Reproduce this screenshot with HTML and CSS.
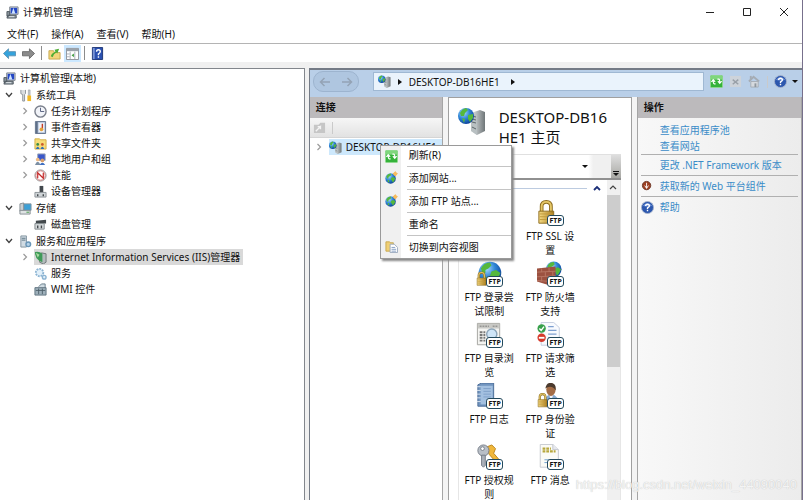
FILE: index.html
```
<!DOCTYPE html>
<html lang="zh-CN">
	<head>
		<meta charset="UTF-8">
		<title>计算机管理</title>
		<link rel="stylesheet" href="styles.css">
	</head>
	<body>
		<!-- 公用图标 -->
		<svg class="defs" aria-hidden="true">
			<defs>
				<radialGradient id="globeFill" cx="35%" cy="30%" r="75%">
					<stop offset="0" stop-color="#a9dcff"/>
					<stop offset="0.5" stop-color="#2f86d6"/>
					<stop offset="1" stop-color="#0b3f96"/>
				</radialGradient>
				<linearGradient id="metal" x1="0" x2="1">
					<stop offset="0" stop-color="#e4e8ea"/>
					<stop offset="1" stop-color="#6f7678"/>
				</linearGradient>
				<linearGradient id="gold" x1="0" x2="1">
					<stop offset="0" stop-color="#f6dc85"/>
					<stop offset="1" stop-color="#a87b1c"/>
				</linearGradient>
				<symbol id="globe" viewBox="0 0 16 16">
					<circle cx="8" cy="8" r="7.5" fill="url(#globeFill)"/>
					<path d="M2 5Q4 1 8 1L9 3L7 5L5 6L5 8L3 8zM9 7L12 6L15 8L13 12L11 14L10 11L8 10zM4 10L6 11L6 14L4 13z" fill="#55b83c"/>
				</symbol>
				<symbol id="server" viewBox="0 0 28 28">
					<path d="M13 6L22 3L27 5V24L19 28L13 24z" fill="url(#metal)"/>
					<path d="M13 6L19 8V28L13 24z" fill="#b9c0c2"/>
					<path d="M14 9L18 10M14 12L18 13M14 15L18 16M14 20L18 22" stroke="#5e676b" fill="none"/>
					<circle cx="8" cy="9" r="8" fill="url(#globeFill)"/>
					<path d="M2 6Q4 2 8 1L10 3L7 6L6 9L3 9zM10 8L15 7L15 11L12 15L10 12zM4 11L7 12L6 16z" fill="#55b83c"/>
				</symbol>
				<symbol id="computer" viewBox="0 0 14 14">
					<path d="M4 1H13V9H4z" fill="#d7dce2" stroke="#78808a"/>
					<path d="M5 2H12V8H5z" fill="#2447c4"/>
					<path d="M8 2L10 8L6 8z" fill="#cfe4ff"/>
					<path d="M1 6H4V11H1zM2 10H11V13H1z" fill="#8a949c" stroke="#4d565e"/>
					<path d="M3 11.5H9" stroke="#e9edf0"/>
				</symbol>
				<symbol id="refresh" viewBox="0 0 14 14">
					<rect x="0.5" y="0.5" width="13" height="13" rx="1" fill="#35b23a" stroke="#8fd98d"/>
					<path d="M1 1H13V5H1z" fill="#7fd67c"/>
					<path d="M6 9.500H4.500Q3.500 9.500 3.500 6M1.500 7.500L3.500 5L5.500 7.500M8 4.500H9.500Q10.500 4.500 10.500 8M8.500 6.500L10.500 9L12.500 6.500" stroke="#fff" stroke-width="1.300" fill="none"/>
				</symbol>
				<symbol id="help" viewBox="0 0 14 14">
					<circle cx="7" cy="7" r="6.500" fill="#2c57ae" stroke="#a8b4cc"/>
					<path d="M2 5Q7 0 12 5Q7 7 2 5z" fill="#6f93d8"/>
					<path d="M5 5.500Q5 3.500 7 3.500T9 5.500Q9 6.500 7 7.500V8.500M7 9.500V11" stroke="#fff" stroke-width="1.500" fill="none"/>
				</symbol>
				<symbol id="siteAdd" viewBox="0 0 14 14">
					<use href="#globe" x="0" y="2" width="12" height="12"/>
					<path d="M11 0L12 2L14 3L12 4L11 6L10 4L8 3L10 2z" fill="#f2a53a"/>
					<circle cx="11" cy="3" r="2" fill="#f7bd5e"/>
				</symbol>
				<symbol id="lock" viewBox="0 0 20 26">
					<path d="M5 13V7Q5 2 10 2T15 7V13" fill="none" stroke="#8d6c1f" stroke-width="4"/>
					<path d="M5 13V7Q5 2 10 2T15 7V13" fill="none" stroke="#e5c766" stroke-width="2"/>
					<path d="M2 12H18V25H2z" fill="url(#gold)" stroke="#8d6c1f"/>
					<path d="M3 15H17M3 18H17M3 21H17" stroke="#c19a3b"/>
				</symbol>
				<symbol id="open" viewBox="0 0 8 8">
					<path d="M1 2L4 5.500L7 2" fill="none" stroke="#404040" stroke-width="1.300"/>
				</symbol>
				<symbol id="closed" viewBox="0 0 8 8">
					<path d="M2.500 1L5.500 4L2.500 7" fill="none" stroke="#9a9a9a" stroke-width="1.200"/>
				</symbol>
			</defs>
		</svg>

		<!-- 标题栏 -->
		<header class="title-bar">
			<svg class="ico"><use href="#computer"/></svg>
			<h1>计算机管理</h1>
			<div class="win-btns">
				<button aria-label="最小化"><svg viewBox="0 0 10 10"><path d="M1 5.500H9" stroke="#222"/></svg></button>
				<button aria-label="最大化"><svg viewBox="0 0 10 10"><path d="M1.500 1.500H8.500V8.500H1.500z" stroke="#222" fill="none"/></svg></button>
				<button aria-label="关闭"><svg viewBox="0 0 10 10"><path d="M1 1L9 9M9 1L1 9" stroke="#222"/></svg></button>
			</div>
		</header>

		<nav class="menu-bar">
			<button>文件(F)</button>
			<button>操作(A)</button>
			<button>查看(V)</button>
			<button>帮助(H)</button>
		</nav>

		<div class="tool-bar">
			<button aria-label="后退"><svg class="ico" viewBox="0 0 14 14"><path d="M0.500 7L6 2V5H13.500V9.500H6V12.500z" fill="#35a3dc" stroke="#5e93b4"/></svg></button>
			<button aria-label="前进"><svg class="ico" viewBox="0 0 14 14"><path d="M13.500 7L8 2V5H0.500V9.500H8V12.500z" fill="#8c8c8c" stroke="#6b6b6b"/></svg></button>
			<i class="sep"></i>
			<button aria-label="上一级"><svg class="ico" viewBox="0 0 14 14"><path d="M1 4H6L7 6H13V13H1z" fill="#f3d67b" stroke="#c7a94f"/><path d="M3 10Q4 6 8 5L7 3L12 2L10 7L9 6Q6 7 5 11z" fill="#4fae36"/></svg></button>
			<button class="on" aria-label="显示操作窗格"><svg class="ico" viewBox="0 0 14 14"><path d="M0.500 1.500H13.500V13.500H0.500z" fill="#fff" stroke="#8a8f96"/><path d="M1 2H13V4.500H1z" fill="#9aa2ab"/><path d="M4.500 5V13M9.500 5V13M1 7.500H4M1 10.500H4" stroke="#a8aeb5"/><path d="M8.500 7V11L6 9z" fill="#3a9a3a"/></svg></button>
			<i class="sep"></i>
			<button aria-label="帮助"><svg class="ico" viewBox="0 0 14 14"><path d="M1.500 0.500H12.500V13.500H1.500z" fill="#2b50b0" stroke="#1c3474"/><path d="M2 1H4V13H2z" fill="#7b95d6"/><path d="M6 5Q6 3 8 3T10 5Q10 6 8 7.500V9M8 10V11.500" fill="none" stroke="#fff" stroke-width="1.500"/></svg></button>
		</div>

		<main class="main">
			<!-- 左侧树 -->
			<section class="tree">
				<div class="row root"><svg class="ico"><use href="#computer"/></svg>计算机管理(本地)</div>
				<ul>
					<li>
						<div class="row"><svg class="arrow"><use href="#open"/></svg><svg class="ico" viewBox="0 0 14 14"><path d="M2 1V5L4 6V13H6V6L7 5V1" fill="#d9dde0" stroke="#8b9298"/><path d="M10 1H12V7H10z" fill="#c3c8cc" stroke="#8b9298" stroke-width="0.500"/><path d="M9 7H13V13H9z" fill="#f2b824"/></svg>系统工具</div>
						<ul>
							<li class="row"><svg class="arrow"><use href="#closed"/></svg><svg class="ico" viewBox="0 0 14 14"><circle cx="7" cy="7" r="6" fill="#f1f3f8" stroke="#7b808c" stroke-width="1.500"/><path d="M7 3V7H11" fill="none" stroke="#555f7d"/></svg>任务计划程序</li>
							<li class="row"><svg class="arrow"><use href="#closed"/></svg><svg class="ico" viewBox="0 0 14 14"><path d="M1.500 0.500H12.500V13.500H1.500z" fill="#b7c6dc" stroke="#5f6f88"/><path d="M2 1H4V13H2z" fill="#5f6f88"/><path d="M5 2H11V12H5z" fill="#eef2f8"/><path d="M9 3V9" stroke="#c33b28" stroke-width="1.500"/><circle cx="8" cy="9" r="2" fill="#e2a23c"/></svg>事件查看器</li>
							<li class="row"><svg class="arrow"><use href="#closed"/></svg><svg class="ico" viewBox="0 0 14 14"><path d="M1 2H6L7 3H13V13H1z" fill="#f7dc77" stroke="#cfae45"/><circle cx="4" cy="8" r="1.500" fill="#3c8c46"/><circle cx="9" cy="8" r="1.500" fill="#cc5a2c"/><path d="M2 13Q4 8 6 13zM7 13Q9 8 11 13z" fill="#2e6fb7"/></svg>共享文件夹</li>
							<li class="row"><svg class="arrow"><use href="#closed"/></svg><svg class="ico" viewBox="0 0 14 14"><path d="M4 1H12V8H4z" fill="#3a57c9" stroke="#9aa4b5"/><circle cx="4" cy="7" r="2" fill="#efbc87"/><path d="M1 13Q4 6 7 13z" fill="#7c8fa4"/><circle cx="9" cy="8" r="2" fill="#d9a06c"/><path d="M6 13Q9 8 12 13z" fill="#3f6fc1"/></svg>本地用户和组</li>
							<li class="row"><svg class="arrow"><use href="#closed"/></svg><svg class="ico" viewBox="0 0 14 14"><circle cx="7" cy="7" r="6" fill="#fff" stroke="#8f8f8f"/><circle cx="7" cy="7" r="5" fill="none" stroke="#cf5151" stroke-width="0.700"/><path d="M4 10V4L10 10V4" fill="none" stroke="#c42a2a" stroke-width="1.300"/></svg>性能</li>
							<li class="row"><i class="arrow"></i><svg class="ico" viewBox="0 0 14 14"><path d="M6 1H10V8H6z" fill="#42484d"/><path d="M1 8H13V13H1z" fill="#cfd4d7" stroke="#8a9196"/><path d="M4 10V12M10 10V12" stroke="#41474b" stroke-width="1.500"/></svg>设备管理器</li>
						</ul>
					</li>
					<li>
						<div class="row"><svg class="arrow"><use href="#open"/></svg><svg class="ico" viewBox="0 0 14 14"><path d="M5 2H13V9H5z" fill="#3ca0d6" stroke="#87949c"/><path d="M1 2L5 1V9L1 10z" fill="#c8ced1" stroke="#858e93"/><path d="M1 9H12V13H1z" fill="#dfe3e4" stroke="#858e93"/><path d="M8 11H11" stroke="#3f9b43"/></svg>存储</div>
						<ul>
							<li class="row"><i class="arrow"></i><svg class="ico" viewBox="0 0 14 14"><path d="M2 3L13 2V6H2z" fill="#43494d"/><path d="M1 6H11V12H1z" fill="#d4d8da" stroke="#80878b"/><path d="M4 8V11M8 8V11" stroke="#42484c" stroke-width="1.500"/></svg>磁盘管理</li>
						</ul>
					</li>
					<li>
						<div class="row"><svg class="arrow"><use href="#open"/></svg><svg class="ico" viewBox="0 0 14 14"><path d="M2 1H8V13H2z" fill="#d0dbe3" stroke="#7f929e"/><path d="M3 3.500H7M3 5.500H7" stroke="#58717f"/><circle cx="10" cy="10" r="2.500" fill="#b5d2e8" stroke="#6996b8" stroke-width="1.500"/></svg>服务和应用程序</div>
						<ul>
							<li class="row"><svg class="arrow"><use href="#closed"/></svg><span class="sel"><svg class="ico" viewBox="0 0 14 14"><path d="M8 2L13 3V12L10 14L6 12z" fill="#b4bbbd" stroke="#6d7577"/><path d="M1 1Q6 0 9 3V12L5 10Q1 7 1 1z" fill="#3f9a58"/><path d="M2 2L6 4L4 7z" fill="#a9dca0"/></svg>Internet Information Services (IIS)管理器</span></li>
							<li class="row"><i class="arrow"></i><svg class="ico" viewBox="0 0 14 14"><circle cx="6" cy="6" r="4" fill="#e2f0fa" stroke="#8cb4d3" stroke-width="2" stroke-dasharray="2 1"/><circle cx="11" cy="11" r="2" fill="#e2f0fa" stroke="#8cb4d3" stroke-width="1.500"/></svg>服务</li>
							<li class="row"><i class="arrow"></i><svg class="ico" viewBox="0 0 14 14"><path d="M5 4L8 1H12V5" fill="#cfdbe2" stroke="#657a88"/><path d="M1 5H13V13H1z" fill="#9eb0bb" stroke="#5c707d"/><path d="M2 8H12M5 6V12M9 6V12" stroke="#50616c"/></svg>WMI 控件</li>
						</ul>
					</li>
				</ul>
			</section>

			<!-- IIS 管理器 -->
			<section class="iis">
				<div class="address-bar">
					<div class="nav-btns">
						<button aria-label="后退"><svg viewBox="0 0 12 12"><path d="M11 6H2M5.500 2L1.500 6L5.500 10" fill="none" stroke="#94a3b5" stroke-width="1.500"/></svg></button>
						<button aria-label="前进"><svg viewBox="0 0 12 12"><path d="M1 6H10M6.500 2L10.500 6L6.500 10" fill="none" stroke="#94a3b5" stroke-width="1.500"/></svg></button>
					</div>
					<div class="path">
						<svg class="ico"><use href="#server"/></svg>
						<i class="tri"></i>
						<span>DESKTOP-DB16HE1</span>
						<i class="tri"></i>
					</div>
					<div class="path-btns">
						<button aria-label="刷新"><svg class="ico"><use href="#refresh"/></svg></button>
						<button aria-label="停止" disabled><svg class="ico" viewBox="0 0 14 14"><path d="M1 1H13V13H1z" fill="#cdd3da"/><path d="M4 5L10 10M10 5L4 10" stroke="#99a0a8" stroke-width="1.500"/></svg></button>
						<button aria-label="主页" disabled><svg class="ico" viewBox="0 0 14 14"><path d="M2 1H4V5H2z" fill="#a5acb4"/><path d="M1 7L6 2L12 7" fill="none" stroke="#a5acb4" stroke-width="2"/><path d="M3 7H11V13H3z" fill="#d5d9de" stroke="#a5acb4"/><path d="M7 9H9V13H7z" fill="#8f979f"/></svg></button>
						<i class="line"></i>
						<button class="drop" aria-label="帮助"><svg class="ico"><use href="#help"/></svg><i class="down"></i></button>
					</div>
				</div>

				<div class="cols">
					<div class="conn">
						<h2>连接</h2>
						<div class="conn-tool">
							<svg class="ico" viewBox="0 0 14 14"><path d="M1 4H6L8 2H13V13H1z" fill="#c6c6c6"/><path d="M3 11L8 6V9M8 6H5" stroke="#f4f4f4" stroke-width="1.500" fill="none"/></svg>
							<i class="line"></i>
						</div>
						<div class="node">
							<svg class="arrow"><use href="#closed"/></svg>
							<span><svg class="ico"><use href="#server"/></svg>DESKTOP-DB16HE1</span>
							<!-- 右键菜单 -->
							<ul class="menu">
								<li><button><svg class="ico"><use href="#refresh"/></svg><span>刷新(R)</span></button></li>
								<li><button><svg class="ico"><use href="#siteAdd"/></svg><span>添加网站...</span></button></li>
								<li><button><svg class="ico"><use href="#siteAdd"/></svg><span>添加 FTP 站点...</span></button></li>
								<li><button><i class="ico"></i><span>重命名</span></button></li>
								<li><button><svg class="ico" viewBox="0 0 14 14"><path d="M1 2H5L6 3H9V12H1z" fill="#f0cf73" stroke="#c8a84f"/><path d="M5.500 4.500H10L13.500 8V13.500H5.500z" fill="#fff" stroke="#9aa9bd"/><path d="M7 8H11M7 10H12M7 12H12" stroke="#8099c0"/></svg><span>切换到内容视图</span></button></li>
							</ul>
						</div>
					</div>

					<div class="home">
						<div class="home-title">
							<svg><use href="#server"/></svg>
							<h2>DESKTOP-DB16HE1 主页</h2>
						</div>
						<div class="filter">
							<i class="down"></i>
							<div class="more"><i class="down"></i></div>
						</div>
						<div class="view">
							<div class="feats">
								<div class="group"><i></i><svg viewBox="0 0 8 8"><path d="M1 6L4 3L7 6" fill="none" stroke="#1b2f78" stroke-width="1.800"/></svg></div>
								<ul>
									<li></li>
									<li><div class="pic"><svg viewBox="0 0 28 28"><use href="#lock" x="0" y="0" width="20" height="26"/></svg><b>FTP</b></div>FTP SSL 设置</li>
									<li><div class="pic"><svg viewBox="0 0 28 28"><use href="#globe" x="2" y="0" width="26" height="26"/><use href="#lock" x="0" y="11" width="12" height="16"/></svg><b>FTP</b></div>FTP 登录尝试限制</li>
									<li><div class="pic"><svg viewBox="0 0 28 28"><use href="#globe" x="9" y="0" width="18" height="18"/><path d="M0 8L20 6V22L13 26L0 22z" fill="#9c5140"/><path d="M0 12L20 11M0 17L20 16M0 21L14 22M5 8V12M13 7V12M9 12V17M17 11V16M5 17V22M13 17V25" stroke="#b87765" fill="none"/></svg><b>FTP</b></div>FTP 防火墙支持</li>
									<li><div class="pic"><svg viewBox="0 0 28 28"><path d="M1.500 1.500H25.500V24.500H1.500z" fill="#f4f4f1" stroke="#a2a29e"/><path d="M2 2H25V7H2z" fill="#c9c9c5"/><path d="M4 4.500H14M18 4.500H23" stroke="#777" stroke-dasharray="2 1"/><path d="M4 11H10M4 14H10M4 17H10M4 20H10" stroke="#777" stroke-width="2" stroke-dasharray="3 1"/><circle cx="17" cy="13" r="5.500" fill="#cfe5f7" stroke="#8ca4b8" stroke-width="1.500"/></svg><b>FTP</b></div>FTP 目录浏览</li>
									<li><div class="pic"><svg viewBox="0 0 28 28"><path d="M4.500 0.500H18L24 6V25H4.500z" fill="#f8fafe" stroke="#c2cbdc"/><path d="M12 5H18M12 9H21M12 13H21M12 17H21" stroke="#7d9fd0" stroke-width="1.500"/><circle cx="5" cy="7" r="4.500" fill="#37a04b"/><path d="M2.500 7L4.500 9L7.500 5" stroke="#fff" fill="none" stroke-width="1.500"/><circle cx="5" cy="17" r="4.500" fill="#d63a2c"/><path d="M2 17H8" stroke="#fff" stroke-width="2"/></svg><b>FTP</b></div>FTP 请求筛选</li>
									<li><div class="pic"><svg viewBox="0 0 28 28"><path d="M2 2L6 0H19V22L16 25H2z" fill="#7295bf" stroke="#496b96"/><path d="M5 3H18V23H5z" fill="#a3c0e0"/><path d="M8 6H16M8 9H16M8 12H16M8 15H16" stroke="#7e9fc7"/><path d="M1 4H5M1 8H5M1 12H5M1 16H5M1 20H5" stroke="#dbe5f0"/></svg><b>FTP</b></div>FTP 日志</li>
									<li><div class="pic"><svg viewBox="0 0 28 28"><path d="M8 22Q8 13 15 12Q24 13 24 25H8z" fill="#87a9d1"/><path d="M13 12L15 19L18 12z" fill="#eef3f8"/><ellipse cx="15" cy="7" rx="5" ry="7" fill="#a36c46"/><path d="M9 6Q10 -1 16 0Q21 1 20 8Q18 4 14 4Q11 4 9 6z" fill="#4b3a2e"/><use href="#lock" x="0" y="10" width="12" height="17"/></svg><b>FTP</b></div>FTP 身份验证</li>
									<li><div class="pic"><svg viewBox="0 0 28 28"><path d="M12 3L17 1L21 5L19 10L25 17L22 20L14 11z" fill="#f0b73b" stroke="#b88218"/><circle cx="8" cy="7" r="6" fill="#b9bfc7" stroke="#747b86"/><circle cx="7" cy="5" r="2" fill="#fff" stroke="#747b86"/><path d="M6 12H10V23L8 25L6 23z" fill="#aab1ba" stroke="#747b86"/></svg><b>FTP</b></div>FTP 授权规则</li>
									<li><div class="pic"><svg viewBox="0 0 28 28"><path d="M3.500 0.500H17L23 6V25H3.500z" fill="#fbfbf6" stroke="#c4c7ce"/><path d="M17 0L17 6H23" fill="#e6e8ee" stroke="#c4c7ce"/><path d="M6 5H15M6 8H20" stroke="#b7a73c" stroke-width="2.500" stroke-dasharray="3 1"/><path d="M8 17H20M8 20H20" stroke="#6b9ccc"/></svg><b>FTP</b></div>FTP 消息</li>
								</ul>
							</div>
							<div class="scroll">
								<svg viewBox="0 0 8 8"><path d="M1 6L4 3L7 6" fill="none" stroke="#444" stroke-width="1.200"/></svg>
								<div class="thumb"></div>
							</div>
						</div>
					</div>

					<aside class="actions">
						<h2>操作</h2>
						<ul>
							<li><a href="#">查看应用程序池</a></li>
							<li><a href="#">查看网站</a></li>
							<li class="cut"><a href="#">更改 .NET Framework 版本</a></li>
							<li class="cut"><svg class="ico" viewBox="0 0 14 14"><circle cx="6" cy="6" r="4.500" fill="#9c3f22" stroke="#6e3a2a"/><path d="M6 3V9M4 6L6 9L8 6" stroke="#fff" fill="none"/></svg><a href="#">获取新的 Web 平台组件</a></li>
							<li class="cut"><svg class="ico"><use href="#help"/></svg><a href="#">帮助</a></li>
						</ul>
					</aside>
				</div>
			</section>
		</main>
		<div class="mark">https://blog.csdn.net/weixin_44090040</div>
	</body>
</html>
```
FILE: styles.css
```
*{
	padding: 0;
	margin: 0;
	box-sizing: border-box;
}
body {
	display: flex;
	flex-direction: column;
	height: 100vh;
	overflow: hidden;
	position: relative;
	border-right: 1px solid #77708c;
	background: #fff;
	color: #111;
	font: 10px/16px "Noto Sans", "Noto Sans CJK SC", sans-serif;
}
ul {
	list-style: none;
}
button {
	border: 0;
	background: none;
	color: inherit;
	font: inherit;
}
a {
	color: #3a8cc8;
	text-decoration: none;
}
svg {
	display: block;
	flex: none;
}
.defs {
	position: absolute;
	width: 0;
	height: 0;
}
.ico {
	width: 13px;
	height: 13px;
	flex: none;
}

/*标题栏*/
.title-bar {
	display: flex;
	align-items: center;
	height: 24px;
	padding-left: 6px;
	gap: 4px;
	flex: none;
}
.title-bar h1 {
	font-size: 10px;
	font-weight: 400;
}
.win-btns {
	display: flex;
	margin-left: auto;
}
.win-btns button {
	width: 37px;
	height: 24px;
}
.win-btns svg {
	width: 10px;
	height: 10px;
	margin: 0 auto;
}

/*菜单和工具栏*/
.menu-bar {
	display: flex;
	height: 20px;
	padding: 1px 0 0 7px;
	gap: 13px;
	border-bottom: 1px solid #b4b4b4;
	flex: none;
}
.tool-bar {
	display: flex;
	align-items: center;
	height: 18px;
	padding-left: 3px;
	gap: 6px;
	flex: none;
}
.tool-bar .sep {
	width: 1px;
	height: 14px;
	background: #8c8c8c;
}
.tool-bar .on {
	margin: 0 -3px;
	padding: 2px;
	background: #cce8ff;
}

.main {
	display: flex;
	flex: 1;
	min-height: 0;
	gap: 4px;
	border-top: 6px solid #f0f0f0;
	background: #f0f0f0;
}

/*左侧树*/
.tree {
	width: 38%;
	padding-top: 1px;
	border: solid #82868c;
	border-width: 1px 1px 0 0;
	background: #fff;
}
.row {
	display: flex;
	align-items: center;
	height: 16px;
	gap: 4px;
	white-space: nowrap;
}
.root {
	padding-left: 3px;
}
.tree > ul > li {
	margin-top: 1px;
}
.tree li > .row {
	padding-left: 5px;
}
.tree li li.row {
	padding-left: 21px;
}
.arrow {
	width: 8px;
	height: 8px;
	flex: none;
}
.tree li > .row > .arrow {
	margin-right: 2px;
}
.tree li li.row > .arrow {
	margin-right: 1px;
}
.sel {
	display: flex;
	align-items: center;
	gap: 4px;
	height: 16px;
	padding-right: 3px;
	background: #d9d9d9;
}

/*IIS*/
.iis {
	display: flex;
	flex-direction: column;
	flex: 1;
	min-width: 0;
	border: solid #747b86;
	border-width: 2px 0 0 1px;
	background: #b9cfe8;
}
.address-bar {
	display: flex;
	align-items: center;
	height: 27px;
	padding: 2px 4px 6px 3px;
	flex: none;
}
.nav-btns {
	display: flex;
	justify-content: space-around;
	align-items: center;
	width: 46px;
	height: 21px;
	border: 1px solid #9db4cf;
	border-radius: 10px;
	background: #afc6e0;
}
.nav-btns svg {
	width: 12px;
	height: 12px;
}
.path {
	display: flex;
	align-items: center;
	flex: 1;
	height: 19px;
	margin-left: 14px;
	padding-left: 4px;
	gap: 7px;
	border: 1px solid #9fb8d3;
	background: #eaf3fc;
}
.path span {
	padding-right: 4px;
}
.tri {
	border: solid transparent;
	border-width: 3px 0 3px 4px;
	border-left-color: #111;
}
.down {
	border: solid transparent;
	border-width: 3px 3px 0;
	border-top-color: #111;
}
.path-btns {
	display: flex;
	align-items: center;
	margin-left: 6px;
	gap: 6px;
}
.line {
	width: 1px;
	height: 12px;
	background: #cacaca;
}
.drop {
	display: flex;
	align-items: center;
	gap: 5px;
}
.cols {
	display: flex;
	flex: 1;
	min-height: 0;
	gap: 5px;
	background: #f4f4f4;
}
.conn h2, .actions h2 {
	height: 21px;
	padding-left: 6px;
	font-size: 10px;
	line-height: 21px;
	background: #bcbabc;
}

/*连接*/
.conn {
	width: 27%;
	border-right: 1px solid #a5a5a5;
	background: #fff;
}
.conn-tool {
	display: flex;
	align-items: center;
	height: 20px;
	padding-left: 3px;
	gap: 6px;
	background: linear-gradient(#f6f6f6, #e2e2e2);
	border-bottom: 1px solid #d5d5d5;
}
.node {
	display: flex;
	align-items: center;
	position: relative;
	height: 18px;
	padding-left: 5px;
	gap: 6px;
}
.node > span {
	display: flex;
	align-items: center;
	flex: 1;
	gap: 4px;
	height: 16px;
	background: #cde8fc;
}
.menu {
	position: absolute;
	left: 70px;
	top: 7px;
	z-index: 2;
	width: 132px;
	border: 1px solid #9a9a9a;
	background: linear-gradient(90deg, #f0f0f0 20px, #fff 20px);
	box-shadow: 2px 2px 2px #888;
}
.menu button {
	display: flex;
	align-items: center;
	width: 100%;
	padding-left: 4px;
	gap: 9px;
	text-align: left;
}
.menu span {
	flex: 1;
	padding: 3px 2px;
}
.menu li + li span {
	border-top: 1px solid #c4c4c4;
}
.menu li:first-child span {
	padding-top: 1px;
}

/*主页*/
.home {
	display: flex;
	flex-direction: column;
	width: 184px;
	padding: 0 10px 0 9px;
	border: 1px solid #a0a0a0;
	border-bottom: 0;
	background: #fff;
}
.home-title {
	display: flex;
	height: 56px;
	padding: 9px 8px 0 0;
	gap: 13px;
}
.home-title svg {
	width: 28px;
	height: 28px;
}
.home-title h2 {
	font-size: 15px;
	font-weight: 400;
	line-height: 20px;
	word-break: break-all;
}
.filter {
	display: flex;
	justify-content: flex-end;
	align-items: center;
	height: 26px;
	gap: 23px;
	border-top: 1px solid #e0e0e0;
	border-bottom: 2px solid #909090;
	background: linear-gradient(90deg, #fff 80%, #f0f0f0 83%);
	flex: none;
}
.more {
	display: flex;
	flex-direction: column;
	align-items: center;
	justify-content: flex-end;
	width: 10px;
	height: 100%;
	padding-bottom: 2px;
	gap: 1px;
	background: linear-gradient(#dedede, #a8a8a4);
}
.more::before {
	content: "";
	width: 6px;
	height: 1px;
	background: #111;
}
.view {
	display: flex;
	flex: 1;
	min-height: 0;
	border: solid #e6e6e6;
	border-width: 0 1px;
}
.feats {
	flex: 1;
}
.group {
	display: flex;
	align-items: center;
	height: 16px;
	padding: 0 6px;
	gap: 6px;
}
.group i {
	flex: 1;
	height: 1px;
	background: #bccbe0;
}
.group svg, .scroll svg {
	width: 8px;
	height: 8px;
}
.feats ul {
	display: grid;
	grid-template-columns: 61px 61px;
	grid-auto-rows: 61px;
	padding-top: 4px;
}
.feats li {
	padding: 0 5px;
	line-height: 14px;
	text-align: center;
	word-break: break-all;
}
.pic {
	position: relative;
	width: 26px;
	height: 29px;
	margin: 0 auto;
}
.pic svg {
	width: 26px;
	height: 26px;
}
.pic b {
	position: absolute;
	right: -1px;
	top: 15px;
	width: 17px;
	height: 11px;
	border: 1px solid #23495c;
	border-radius: 3px;
	background: #fff;
	font-size: 7px;
	line-height: 9px;
}
.scroll {
	width: 13px;
	background: #f0f0f0;
}
.scroll svg {
	margin: 3px auto 4px;
}
.thumb {
	height: 172px;
	background: #cdcdcd;
}

/*操作*/
.actions {
	flex: 1;
	border: solid #a5a5a5;
	border-width: 0 1px;
	background: linear-gradient(90deg, #f8f8f8, #ececec);
}
.actions ul {
	padding: 4px 3px;
}
.actions li {
	display: flex;
	align-items: center;
	height: 16px;
	gap: 6px;
	white-space: nowrap;
}
.actions li a:first-child {
	margin-left: 19px;
}
.actions .cut {
	height: 21px;
	border-top: 1px solid #b0b0b0;
}

.mark {
	position: absolute;
	right: 5px;
	bottom: 6px;
	color: #f4f4f4;
	font: 13px/18px "Liberation Sans", sans-serif;
	text-shadow: 0 0 1px #b8b8b8;
}
```
